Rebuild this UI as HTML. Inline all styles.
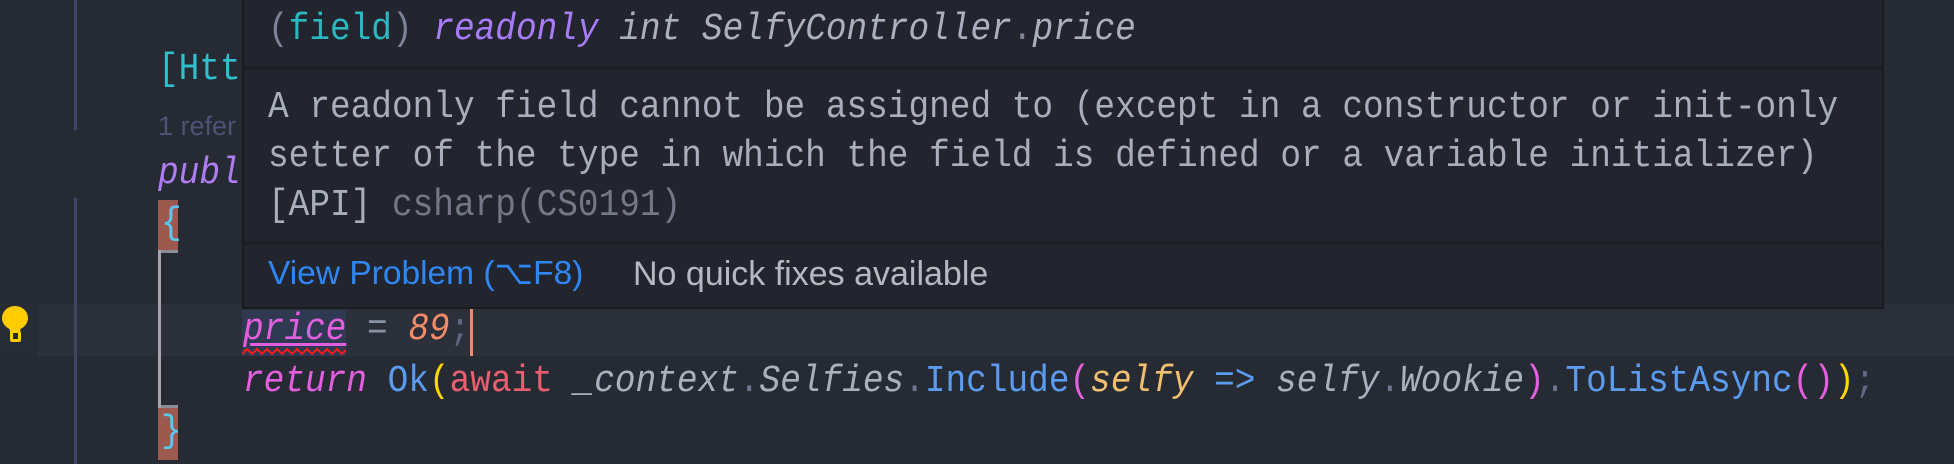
<!DOCTYPE html>
<html><head><meta charset="utf-8"><style>
html,body{margin:0;padding:0}
body{width:1954px;height:464px;background:#262a33;position:relative;overflow:hidden;font-family:"Liberation Mono",monospace;font-size:38px}
.a{position:absolute;white-space:pre}
.c{transform:scaleX(0.906);transform-origin:0 0}
</style></head><body>
<div class="a" style="left:0;top:304px;width:1954px;height:52px;background:#2c303b"></div>
<div class="a" style="left:0;top:304px;width:38px;height:52px;background:#272b33"></div>
<div class="a" style="left:74px;top:0;width:3px;height:130px;background:#424463"></div>
<div class="a" style="left:74px;top:198px;width:3px;height:266px;background:#424463"></div>
<div class="a" style="left:158px;top:200px;width:20px;height:50px;background:#9c5a4f"></div>
<div class="a" style="left:158px;top:408px;width:20px;height:52px;background:#9c5a4f"></div>
<div class="a" style="left:158px;top:250px;width:20px;height:3px;background:#8a8d96"></div>
<div class="a" style="left:158px;top:405px;width:20px;height:3px;background:#8a8d96"></div>
<div class="a" style="left:158px;top:250px;width:3px;height:158px;background:#a9a3ab"></div>
<div class="a c" style="left:158px;top:44px;height:52px;line-height:52px;color:#2fbfcf">[Htt</div>
<div class="a" style="left:158px;top:104px;font-family:'Liberation Sans',sans-serif;font-size:27px;line-height:44px;color:#4f5275">1 refer</div>
<div class="a c" style="left:158px;top:148px;line-height:52px;color:#b07cf4;font-style:italic">publ</div>
<div class="a c" style="left:161px;top:198px;line-height:52px;color:#5ec4f0">{</div>
<div class="a c" style="left:161px;top:406px;line-height:52px;color:#5ec4f0">}</div>
<div class="a" style="left:242px;top:310px;width:104px;height:46px;background:#2f3a52"></div>
<svg class="a" style="left:242px;top:346px" width="104" height="10"><path d="M0 8 L5 3 L10 8 L15 3 L20 8 L25 3 L30 8 L35 3 L40 8 L45 3 L50 8 L55 3 L60 8 L65 3 L70 8 L75 3 L80 8 L85 3 L90 8 L95 3 L100 8 L104 4" stroke="#ff1a1a" stroke-width="2" fill="none"/></svg>
<div class="a c" style="left:243px;top:304px;line-height:52px"><span style="color:#e35fe0;font-style:italic;text-decoration:underline;text-underline-offset:4px">price</span><span style="color:#8a93a6"> = </span><span style="color:#f58a66;font-style:italic">89</span><span style="color:#5e6585">;</span></div>
<div class="a" style="left:470px;top:306px;width:3px;height:50px;background:#f58a66"></div>
<div class="a c" style="left:243px;top:356px;line-height:52px;color:#aab0bd"><span style="color:#e35fe0;font-style:italic">return</span> <span style="color:#5b9cf0">Ok</span><span style="color:#ffd700">(</span><span style="color:#ea5f6f">await</span> <span style="font-style:italic">_context</span><span style="color:#6f7690">.</span><span style="font-style:italic">Selfies</span><span style="color:#6f7690">.</span><span style="color:#5b9cf0">Include</span><span style="color:#e35fe0">(</span><span style="color:#f0c070;font-style:italic">selfy</span> <span style="color:#5b9cf0">=&gt;</span> <span style="font-style:italic">selfy</span><span style="color:#6f7690">.</span><span style="font-style:italic">Wookie</span><span style="color:#e35fe0">)</span><span style="color:#6f7690">.</span><span style="color:#5b9cf0">ToListAsync</span><span style="color:#e35fe0">()</span><span style="color:#ffd700">)</span><span style="color:#5e6585">;</span></div>
<svg class="a" style="left:2px;top:306px" width="30" height="40"><ellipse cx="13" cy="12" rx="13" ry="12" fill="#ffcc00"/><path d="M6 18 L9 29 L17 29 L20 18Z" fill="#ffcc00"/><rect x="8" y="25" width="11" height="11" rx="2" fill="#ffcc00"/><rect x="11" y="27" width="5" height="6" fill="#2a2b30"/></svg>
<div class="a" style="left:242px;top:0;width:1638px;height:307px;background:#22252d;border:2px solid #1a1c21;border-top:none"></div>
<div class="a" style="left:244px;top:66px;width:1638px;height:4px;background:#1d1f25"></div>
<div class="a" style="left:244px;top:241px;width:1638px;height:4px;background:#1d1f25"></div>
<div class="a c" style="left:268px;top:5px;line-height:50px;color:#aab0bd"><span style="color:#7c8396">(</span><span style="color:#2bb8c0">field</span><span style="color:#7c8396">)</span> <span style="color:#a87cf8;font-style:italic">readonly</span> <span style="font-style:italic">int</span> <span style="font-style:italic">SelfyController</span><span style="color:#7c8396">.</span><span style="font-style:italic">price</span></div>
<div class="a c" style="left:268px;top:83px;line-height:49px;color:#a8aebb">A readonly field cannot be assigned to (except in a constructor or init-only
setter of the type in which the field is defined or a variable initializer)
[API] <span style="color:#737886">csharp(CS0191)</span></div>
<div class="a" style="left:268px;top:254px;line-height:40px;font-family:'Liberation Sans',sans-serif;font-size:33.5px;color:#2f86f5">View Problem (⌥F8)</div>
<div class="a" style="left:633px;top:254px;line-height:40px;font-family:'Liberation Sans',sans-serif;font-size:34px;color:#b5b9c2">No quick fixes available</div>
</body></html>
